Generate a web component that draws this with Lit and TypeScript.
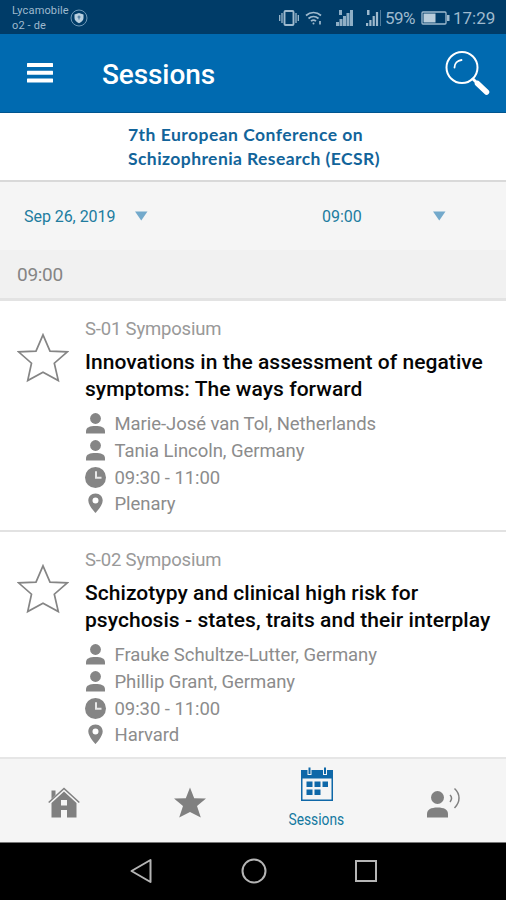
import { LitElement, html, css, svg } from "lit";
import { customElement } from "lit/decorators.js";

interface Session {
  code: string;
  title: string[];
  speakers: string[];
  time: string;
  room: string;
}

const SESSIONS: Session[] = [
  {
    code: "S-01 Symposium",
    title: ["Innovations in the assessment of negative", "symptoms: The ways forward"],
    speakers: ["Marie-José van Tol, Netherlands", "Tania Lincoln, Germany"],
    time: "09:30 - 11:00",
    room: "Plenary",
  },
  {
    code: "S-02 Symposium",
    title: ["Schizotypy and clinical high risk for", "psychosis - states, traits and their interplay"],
    speakers: ["Frauke Schultze-Lutter, Germany", "Phillip Grant, Germany"],
    time: "09:30 - 11:00",
    room: "Harvard",
  },
];

const person = html`<svg width="22" height="22" viewBox="0 0 22 22" fill="#858585">
  <circle cx="10.5" cy="5.500" r="5.4" />
  <path d="M1 20.500v-2.200c0-4 4-5.300 9.500-5.300s9.500 1.300 9.500 5.300V20.500z" />
</svg>`;

const clock = html`<svg width="22" height="22" viewBox="0 0 22 22">
  <circle cx="10.500" cy="10.500" r="10.500" fill="#858585" />
  <path d="M11 4.300v6.500h5.500" fill="none" stroke="#e8e8e8" stroke-width="2" />
</svg>`;

const pin = html`<svg width="22" height="22" viewBox="0 0 22 22">
  <path fill="#858585" fill-rule="evenodd" d="M10.500 0.500C6.200 0.500 3.300 3.500 3.300 7.400c0 5 7.200 12.600 7.200 12.600s7.200-7.600 7.200-12.600C17.700 3.500 14.800 0.500 10.500 0.500zm0 4.100a3 3 0 1 1 0 6 3 3 0 0 1 0-6z" />
</svg>`;

const star = html`<svg width="52" height="50" viewBox="0 0 52 50">
  <path d="M26 1.800L33 18.200L50.300 18.800L37.300 30.200L41.300 47.600L26 39.300L10.700 47.600L14.500 30.200L1.500 18.800L19 18.200Z"
    fill="none" stroke="#858585" stroke-width="1.700" />
</svg>`;

const bars = (heights: number[], x0: number, w: number, step: number) =>
  heights.map((h, i) => svg`<rect x=${x0 + i * step} y=${17 - h} width=${w} height=${h} />`);

@customElement("app-root")
export class AppRoot extends LitElement {
  static styles = css`
    :host {
      display: flex;
      flex-direction: column;
      width: 506px;
      height: 900px;
      overflow: hidden;
      background: #fff;
      font-family: Roboto, "Liberation Sans", sans-serif;
      color: #8c8c8c;
    }
    svg { display: block; flex: none; }
    .status {
      display: flex;
      align-items: center;
      box-sizing: border-box;
      height: 34px;
      flex: none;
      padding: 0 10px 0 12px;
      background: #003c68;
      color: #9fbace;
    }
    .carrier { width: 58px; font-size: 11px; line-height: 15.500px; padding-top: 2px; white-space: nowrap; letter-spacing: 0.14px; }
    .shield { margin-top: 2px; }
    .tray { margin-left: auto; display: flex; align-items: center; margin-top: 2px; font-size: 17px; line-height: 20px; white-space: nowrap; }
    .vibrate { margin-right: 6px; }
    .wifi { margin-right: 13px; }
    .signal { margin-right: 12px; }
    .signal.last { margin-right: 4px; }
    .percent { width: 36px; letter-spacing: -0.5px; }
    .clock { width: 43px; }
    .header {
      display: flex;
      align-items: center;
      box-sizing: border-box;
      height: 79px;
      flex: none;
      padding: 0 16px 0 27px;
      background: #006ab0;
      border-bottom: 1px solid #00558f;
      color: #fff;
    }
    .heading { flex: 1; margin: 4px 0 0 49px; font-size: 28px; line-height: 34px; font-weight: 500; letter-spacing: -0.1px; }
    .banner {
      box-sizing: border-box;
      height: 69px;
      flex: none;
      padding: 10px 0 0 128px;
      border-bottom: 2px solid #d9d9d9;
      color: #12649a;
      font: 700 17.500px/24px Lato, "Open Sans", sans-serif;
      white-space: nowrap;
    }
    .b1 { letter-spacing: 0.47px; }
    .b2 { letter-spacing: 0.42px; }
    .filters {
      display: flex;
      align-items: center;
      height: 68px;
      flex: none;
      padding-left: 24px;
      background: #f5f5f5;
      color: #217c9f;
      font-size: 16px;
      font-weight: 400;
    }
    .date { width: 111px; letter-spacing: -0.05px; }
    .gap { width: 174px; }
    .hour { width: 111px; }
    .group {
      box-sizing: border-box;
      height: 51px;
      flex: none;
      padding-left: 17px;
      background: #f1f1f1;
      border-bottom: 3px solid #e3e3e3;
      font-size: 19px;
      letter-spacing: -0.3px;
      line-height: 49px;
      color: #858585;
    }
    .card {
      display: flex;
      box-sizing: border-box;
      height: 231px;
      flex: none;
      padding: 16px 0 0 17px;
      border-bottom: 2px solid #e2e2e2;
      white-space: nowrap;
    }
    .card:last-child { height: 225px; border-bottom: 0; }
    .star { width: 68px; padding-top: 16px; }
    .code { font-size: 18.500px; line-height: 24px; letter-spacing: -0.18px; color: #999; }
    .title { margin: 8px 0 8px; font-size: 21px; line-height: 27px; font-weight: 500; letter-spacing: 0.05px; color: #050505; }
    .row { display: flex; align-items: center; height: 26.700px; font-size: 18.500px; letter-spacing: -0.06px; gap: 7.500px; }
    .list { flex: none; }
    .tabs {
      display: grid;
      grid-template-columns: repeat(4, 1fr);
      height: 86px;
      box-sizing: border-box;
      flex: none;
      padding-left: 1px;
      background: #f5f5f5;
      border-top: 2px solid #e6e6e6;
      border-bottom: 1px solid #777;
    }
    .tab { display: flex; flex-direction: column; align-items: center; padding-top: 28px; }
    .tab.active { padding-top: 8px; color: #12789f; font-size: 16px; line-height: 20px; }
    .label { margin-top: 8px; transform: scaleX(0.86); }
    .system { display: flex; justify-content: center; align-items: center; flex: 1; gap: 88px; padding-bottom: 1px; background: #000; }
  `;

  private card(s: Session) {
    return html`<article class="card">
      <div class="star">${star}</div>
      <div class="body">
        <div class="code">${s.code}</div>
        <div class="title">${s.title.map((t) => html`<div>${t}</div>`)}</div>
        ${s.speakers.map((p) => html`<div class="row">${person}<span>${p}</span></div>`)}
        <div class="row">${clock}<span>${s.time}</span></div>
        <div class="row">${pin}<span>${s.room}</span></div>
      </div>
    </article>`;
  }

  render() {
    const arrow = html`<svg width="13" height="10" viewBox="0 0 13 10"><path d="M0 0.500h12.500L6.250 9.500z" fill="#73a9cb" /></svg>`;
    return html`
      <div class="status">
        <div class="carrier"><div>Lycamobile</div><div>o2 - de</div></div>
        <svg class="shield" width="18" height="18" viewBox="0 0 18 18" fill="none">
          <circle cx="9" cy="9" r="8" stroke="#6f98b6" />
          <path d="M9 4l4.500 1.500v3.500c0 2.500-2 4-4.500 5.200C6.500 13 4.500 11.500 4.500 9V5.500z" fill="#b9d0e0" />
          <path d="M9 6.500v4M7.500 8h3" stroke="#3d6d92" />
        </svg>
        <div class="tray">
          <svg class="vibrate" width="20" height="18" viewBox="0 0 20 18" fill="none" stroke="#9fbace">
            <rect x="5.500" y="2" width="9" height="14" rx="1" stroke-width="1.900" />
            <path d="M3 4v10M17 4v10M0.700 6v6M19.300 6v6" stroke-width="1.300" />
          </svg>
          <svg class="wifi" width="17" height="16" viewBox="0 0 17 16" fill="none" stroke="#9fbace" stroke-width="1.700">
            <path d="M1 5.500c4.500-4 10.500-4 15 0M3.500 8.500c3-2.600 7-2.600 10 0M6 11.200c1.500-1.300 3.500-1.300 5 0" />
            <circle cx="8.500" cy="13.500" r="1" fill="#9fbace" stroke="none" />
            <path d="M15 11v3.500" />
          </svg>
          <svg class="signal" width="19" height="18" viewBox="0 0 19 18" fill="#8fafc6">
            ${bars([4, 7, 10, 13, 16], 1, 3, 3.500)}<rect x="4" y="1" width="3" height="5" />
          </svg>
          <svg class="signal last" width="15" height="18" viewBox="0 0 15 18" fill="#9fbace">
            ${bars([3, 6, 10, 14], 0, 2.200, 3.300)}<rect x="1" y="1" width="2.500" height="5" /><rect x="14" y="1" width="1" height="16" opacity="0.500" />
          </svg>
          <span class="percent">59%</span>
          <svg width="32" height="16" viewBox="0 0 32 16">
            <rect x="1" y="2" width="24" height="12" rx="1" fill="none" stroke="#9fbace" stroke-width="1.300" />
            <rect x="2.500" y="3.500" width="12" height="9" fill="#b9cddb" />
            <rect x="26" y="5" width="2.500" height="6" fill="#9fbace" />
          </svg>
          <span class="clock">17:29</span>
        </div>
      </div>
      <header class="header">
        <svg width="26" height="20" viewBox="0 0 26 20" fill="#fff">
          <rect y="0" width="26" height="4" rx="0.500" /><rect y="7.800" width="26" height="4" rx="0.500" /><rect y="15.500" width="26" height="4" rx="0.500" />
        </svg>
        <div class="heading">Sessions</div>
        <svg width="45" height="46" viewBox="0 0 45 46" fill="none" stroke="#fff" stroke-linecap="round">
          <circle cx="17" cy="17.500" r="15.500" stroke-width="2" />
          <path d="M9.500 17.500c0-4 3-7 7-7.500" stroke-width="1.800" />
          <path d="M28 29l4 4" stroke-width="3" />
          <path d="M32.500 33.500l9 8.500" stroke-width="5.500" />
        </svg>
      </header>
      <div class="banner"><div><span class="b1">7th European Conference on</span></div><div><span class="b2">Schizophrenia Research (ECSR)</span></div></div>
      <div class="filters">
        <span class="date">Sep 26, 2019</span>${arrow}<span class="gap"></span><span class="hour">09:00</span>${arrow}
      </div>
      <div class="group">09:00</div>
      <main class="list">${SESSIONS.map((s) => this.card(s))}</main>
      <nav class="tabs">
        <div class="tab">
          <svg width="32" height="32" viewBox="0 0 32 32" fill="#808080">
            <path d="M3.500 3.500H7.500V8L3.500 12z" />
            <path d="M0.700 15.500L16 1.500L31.300 15.500" fill="none" stroke="#808080" stroke-width="1.600" />
            <path fill-rule="evenodd" d="M16 4.500L28.500 16V30.500H19V23H13V30.500H3.500V16zM13 13v5.500h6V13z" />
          </svg>
        </div>
        <div class="tab">
          <svg width="32" height="32" viewBox="0 0 32 32"><path fill="#808080" d="M16 0.500L20.200 11.200L32 11.500L23 19L26.800 30.500L16 25L5.200 30.500L9 19L0 11.500L11.800 11.200Z" /></svg>
        </div>
        <div class="tab active">
          <svg width="34" height="35" viewBox="0 0 34 35" fill="#0f68a8">
            <path fill-rule="evenodd" d="M1 3H33V34H1zM2.500 11.500V32.500H31.500V11.500z" />
            <path d="M7.500 0h4v8h-4zM23 0h4v8h-4z" fill="#f5f5f5" />
            <path d="M8.500 0.500h2v6.500h-2zM24 0.500h2v6.500h-2z" />
            <path d="M6.500 14.500h6v5.500h-6zM14.500 14.500h6v5.500h-6zM22.500 14.500h5.500v5.500h-5.500zM6.500 22.500h6v5.500h-6zM14.500 22.500h6v5.500h-6z" />
          </svg>
          <span class="label">Sessions</span>
        </div>
        <div class="tab">
          <svg width="34" height="32" viewBox="0 0 34 32" fill="#808080">
            <circle cx="11.500" cy="10.500" r="6.500" />
            <path d="M1 30.500V27c0-4.500 4-6.500 10.500-6.500S22 22.500 22 27v3.500z" />
            <path d="M24 8c2 2 2 4.500 0 7M28.500 1.500c6 5.500 6 13.500 0 19.500" fill="none" stroke="#808080" stroke-width="1.500" />
          </svg>
        </div>
      </nav>
      <div class="system">
        <svg width="24" height="26" viewBox="0 0 24 26"><path d="M21.500 2v22L2.500 13z" fill="none" stroke="#b5b5b5" stroke-width="2" stroke-linejoin="round" /></svg>
        <svg width="26" height="26" viewBox="0 0 26 26"><circle cx="13" cy="13" r="11.500" fill="none" stroke="#b5b5b5" stroke-width="2" /></svg>
        <svg width="22" height="22" viewBox="0 0 22 22"><rect x="1" y="1" width="20" height="20" fill="none" stroke="#b5b5b5" stroke-width="2" /></svg>
      </div>
    `;
  }
}
